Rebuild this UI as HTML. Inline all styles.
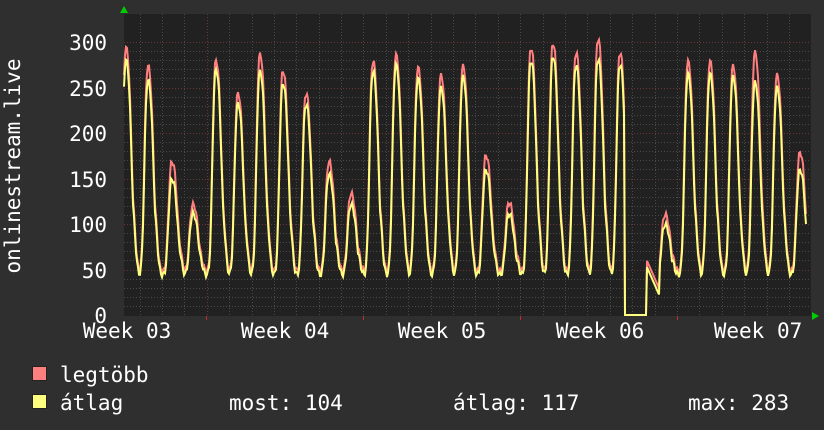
<!DOCTYPE html>
<html><head><meta charset="utf-8"><style>
html,body{margin:0;padding:0;background:#2f2f2f;width:824px;height:430px;overflow:hidden}
svg{display:block}
text{font-family:"DejaVu Sans Mono","Liberation Mono",monospace;font-size:21px;fill:#fff}
</style></head><body>
<svg id="g" width="824" height="430" xmlns="http://www.w3.org/2000/svg">
<rect x="124" y="14" width="687" height="302" fill="#212121"/>
<g id="grid"></g>
<g id="data"></g>
<polygon points="120,13 128,13 124,6" fill="#00cc00"/>
<polygon points="812,312 812,320 819,316" fill="#00cc00"/>
<text x="107" y="50" text-anchor="end">300</text>
<text x="107" y="96" text-anchor="end">250</text>
<text x="107" y="141" text-anchor="end">200</text>
<text x="107" y="187" text-anchor="end">150</text>
<text x="107" y="232" text-anchor="end">100</text>
<text x="107" y="278" text-anchor="end">50</text>
<text x="107" y="323" text-anchor="end">0</text>
<text transform="translate(20,166) rotate(-90)" text-anchor="middle">onlinestream.live</text>
<text x="127" y="338" text-anchor="middle">Week 03</text>
<text x="285" y="338" text-anchor="middle">Week 04</text>
<text x="442" y="338" text-anchor="middle">Week 05</text>
<text x="600" y="338" text-anchor="middle">Week 06</text>
<text x="758" y="338" text-anchor="middle">Week 07</text>
<rect x="32.5" y="366.5" width="14" height="14" fill="#ff7f7f" stroke="#222" />
<rect x="32.5" y="394.5" width="14" height="14" fill="#ffff7f" stroke="#222" />
<text x="60" y="382">legtöbb</text>
<text x="60" y="410">átlag</text>
<text x="229" y="410">most: 104</text>
<text x="453" y="410">átlag: 117</text>
<text x="688" y="410">max: 283</text>
</svg>
<script>
var NS="http://www.w3.org/2000/svg";
var grid=document.getElementById('grid'),data=document.getElementById('data');
function line(x1,y1,x2,y2,c,d){var l=document.createElementNS(NS,'line');l.setAttribute('x1',x1);l.setAttribute('y1',y1);l.setAttribute('x2',x2);l.setAttribute('y2',y2);l.setAttribute('stroke',c);l.setAttribute('stroke-width',1);if(d)l.setAttribute('stroke-dasharray',d);grid.appendChild(l);}
var Y0=315,K=0.91;
for(var v=10;v<=300;v+=10){var y=Math.round(Y0-v*K)+0.5;line(124,y,811,y,v%50==0?'#6a3535':'#4a4a4a','1,2');}
for(var x=206.7-22.4*3;x<811;x+=22.4){var xx=Math.round(x)+0.5;if(xx<125)continue;var maj=Math.abs(((x-206.7)/22.4)%7)<0.01;line(xx,14,xx,316,maj?'#6a3535':'#4a4a4a','1,2');}
[206.5,363.5,520.5,677.5].forEach(function(x){line(x,316,x,320,'#c03030');});
var peaks=[[126,290,280],[148,270,258],[172,165,150],[193,118,112],[216,276,270],[238,240,233],[260,283,268],[283,265,255],[306,240,232],[329,165,155],[351,130,122],[373,275,268],[396,282,275],[418,268,260],[441,260,250],[463,270,262],[486,172,160],[509,120,112],[531,290,280],[553,295,285],[576,285,275],[598,300,282],[620,285,276],[665,107,100],[688,275,265],[710,275,265],[733,270,262],[755,285,256],[777,260,250],[800,175,160]];
function val(x,k){var s=0;for(var i=0;i<peaks.length;i++){var p=peaks[i],d=(x-p[0])/22.4;var w=d<0?0.2:0.3;var f=Math.exp(-Math.pow(Math.abs(d)/w,2.6));var h=p[k]-45;if(d>0&&d<0.6)f=Math.max(f,0.3*Math.exp(-((d-0.3)/0.15)*((d-0.3)/0.15)));s=Math.max(s,h*f);}
var base=k==1?48:44;var n=Math.sin(x*1.7)*3;var v=base+s+n;
if(x>=625&&x<=646)v=0;
if(x>646&&x<660){var t=(x-646)/14;v=(k==1?62:55)-35*t;}
if(x>=660&&x<665)v=Math.max(v,30);
return Math.max(0,v);}
function poly(k,c){var pts=[];for(var x=124;x<=806;x+=1){pts.push(x+','+(Y0-val(x,k)*K).toFixed(1));}var p=document.createElementNS(NS,'polyline');p.setAttribute('points',pts.join(' '));p.setAttribute('fill','none');p.setAttribute('stroke',c);p.setAttribute('stroke-width',2);data.appendChild(p);}
poly(1,'#ff7f7f');poly(2,'#ffff7f');
</script>
</body></html>
